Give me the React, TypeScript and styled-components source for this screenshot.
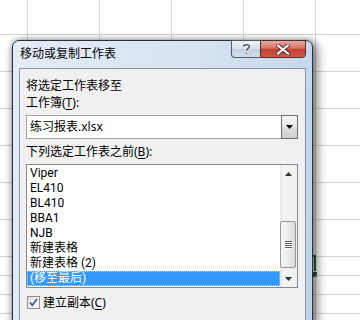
import styled, { createGlobalStyle } from "styled-components";

const GlobalStyle = createGlobalStyle`
  html, body {
    margin: 0;
    padding: 0;
    background: #fff;
  }
  body {
    width: 360px;
    height: 320px;
    overflow: hidden;
    font-family: "Noto Sans", "Noto Sans CJK SC", sans-serif;
  }
`;

const colWidths = [28, 72, 72, 72, 72, 72];
const rowHeights = [35, 37, 37, 37, 37, 37, 37, 19, 19, 19, 19];
const activeCell = { row: 7, col: 4 };

const sheets = [
  "Viper",
  "EL410",
  "BL410",
  "BBA1",
  "NJB",
  "新建表格",
  "新建表格 (2)",
  "(移至最后)",
];
const selectedSheet = 7;

export default function App() {
  return (
    <Screen>
      <GlobalStyle />
      <Sheet>
        {rowHeights.map((_, r) =>
          colWidths.map((_, c) => (
            <Cell key={`${r}-${c}`}>
              {r === activeCell.row && c === activeCell.col && (
                <Selection>
                  <FillHandle />
                </Selection>
              )}
            </Cell>
          ))
        )}
      </Sheet>

      <Dialog>
        <TitleBar>
          <Title>移动或复制工作表</Title>
          <CaptionButtons>
            <HelpButton>
              <svg width="9" height="12" viewBox="0 0 9 12">
                <path
                  d="M1.5 3.5 C1.5 1.2 7.5 1.2 7.5 3.6 C7.5 5.6 4.5 5.4 4.5 7.8"
                  fill="none"
                  stroke="#fff"
                  strokeWidth="3.2"
                />
                <path
                  d="M1.5 3.5 C1.5 1.2 7.5 1.2 7.5 3.6 C7.5 5.6 4.5 5.4 4.5 7.8"
                  fill="none"
                  stroke="#4b5563"
                  strokeWidth="1.6"
                />
                <rect x="3.3" y="9.2" width="2.4" height="2.4" fill="#4b5563" stroke="#fff" strokeWidth="0.6" />
              </svg>
            </HelpButton>
            <CloseButton>
              <svg width="14" height="11" viewBox="0 0 14 11">
                <path d="M2 1.5 L12 9.5 M12 1.5 L2 9.5" stroke="#5a2020" strokeWidth="4" strokeLinecap="square" />
                <path d="M2 1.5 L12 9.5 M12 1.5 L2 9.5" stroke="#fff" strokeWidth="2.2" strokeLinecap="square" />
              </svg>
            </CloseButton>
          </CaptionButtons>
        </TitleBar>

        <Client>
          <Label>将选定工作表移至</Label>
          <Label>
            工作簿(<u>T</u>):
          </Label>
          <Combo>
            <ComboText>练习报表.xlsx</ComboText>
            <DropButton>
              <svg width="7" height="4" viewBox="0 0 7 4">
                <path d="M0 0 H7 L3.5 4 Z" fill="#000" />
              </svg>
            </DropButton>
          </Combo>

          <Label $gap={4}>
            下列选定工作表之前(<u>B</u>):
          </Label>
          <ListBox>
            <Items>
              {sheets.map((name, i) => (
                <Item key={name} $selected={i === selectedSheet}>
                  {name}
                </Item>
              ))}
            </Items>
            <ScrollBar>
              <ScrollArrow>
                <svg width="7" height="4" viewBox="0 0 7 4">
                  <path d="M0 4 H7 L3.5 0 Z" fill="#333" />
                </svg>
              </ScrollArrow>
              <Track $offset={39}>
                <Thumb>
                  <Grip>
                    <span />
                    <span />
                    <span />
                    <span />
                  </Grip>
                </Thumb>
              </Track>
              <ScrollArrow>
                <svg width="7" height="4" viewBox="0 0 7 4">
                  <path d="M0 0 H7 L3.5 4 Z" fill="#333" />
                </svg>
              </ScrollArrow>
            </ScrollBar>
          </ListBox>

          <CheckRow>
            <CheckBox>
              <svg width="11" height="11" viewBox="0 0 11 11">
                <path d="M2 5.5 L4.3 8.3 L9 2" fill="none" stroke="#4a5f94" strokeWidth="1.8" />
              </svg>
            </CheckBox>
            <CheckLabel>
              建立副本(<u>C</u>)
            </CheckLabel>
          </CheckRow>
        </Client>
      </Dialog>
    </Screen>
  );
}

const Screen = styled.div`
  position: relative;
  width: 360px;
  height: 320px;
  overflow: hidden;
  background: #fff;
`;

const Sheet = styled.div`
  display: grid;
  grid-template-columns: ${colWidths.map((w) => `${w}px`).join(" ")};
  grid-template-rows: ${rowHeights.map((h) => `${h}px`).join(" ")};
`;

const Cell = styled.div`
  position: relative;
  box-sizing: border-box;
  border-right: 1px solid #d4d4d4;
  border-bottom: 1px solid #d4d4d4;
`;

const Selection = styled.div`
  position: absolute;
  top: -2px;
  left: -2px;
  right: -1px;
  bottom: -1px;
  border: 2px solid #1f5a3c;
`;

const FillHandle = styled.div`
  position: absolute;
  right: -4px;
  bottom: -4px;
  width: 5px;
  height: 5px;
  background: #1f5a3c;
  border: 1px solid #fff;
`;

const Dialog = styled.div`
  position: absolute;
  left: 12px;
  top: 40px;
  width: 301px;
  height: 300px;
  box-sizing: border-box;
  display: flex;
  flex-direction: column;
  border: 1px solid #29313b;
  border-radius: 7px 7px 0 0;
  background: linear-gradient(100deg, #e4ecf5 0%, #d6e2ef 55%, #bdd3eb 100%);
  box-shadow: 3px 3px 10px 2px rgba(0, 0, 0, 0.45), 0 0 4px rgba(0, 0, 0, 0.3);
`;

const TitleBar = styled.div`
  height: 27px;
  display: flex;
  justify-content: space-between;
  align-items: flex-start;
  padding-left: 7px;
  padding-right: 6px;
`;

const Title = styled.div`
  padding-top: 4px;
  font-size: 12px;
  line-height: 17px;
  color: #000;
`;

const CaptionButtons = styled.div`
  display: flex;
  margin-top: -1px;
  height: 18px;
`;

const HelpButton = styled.div`
  width: 29px;
  box-sizing: border-box;
  display: flex;
  align-items: center;
  justify-content: center;
  border: 1px solid #4e5b6d;
  border-right: none;
  border-radius: 0 0 0 4px;
  background: linear-gradient(#eef2f8 0%, #d8e0eb 48%, #c2cedd 52%, #d5dfeb 100%);
`;

const CloseButton = styled.div`
  width: 46px;
  box-sizing: border-box;
  display: flex;
  align-items: center;
  justify-content: center;
  border: 1px solid #51302c;
  border-radius: 0 0 4px 0;
  background: linear-gradient(#e8a89f 0%, #d97466 45%, #c33f30 52%, #cf5a4a 100%);
`;

const Client = styled.div`
  flex: 1;
  margin: 0 6px;
  box-sizing: border-box;
  border: 1px solid #8797ab;
  border-bottom: none;
  background: #f0f0f0;
  padding: 8px 0 0 6px;
  display: flex;
  flex-direction: column;
  align-items: flex-start;
`;

const Label = styled.div<{ $gap?: number }>`
  margin-top: ${(p) => p.$gap ?? 0}px;
  font-size: 12px;
  line-height: 17px;
  color: #000;
  u {
    text-underline-offset: 2px;
  }
`;

const Combo = styled.div`
  margin-top: 4px;
  width: 272px;
  height: 24px;
  box-sizing: border-box;
  display: flex;
  border: 1px solid #a3a3a3;
  background: #fff;
`;

const ComboText = styled.div`
  flex: 1;
  padding-left: 3px;
  font-size: 12px;
  line-height: 22px;
  color: #000;
`;

const DropButton = styled.div`
  width: 17px;
  margin: -1px -1px -1px 0;
  box-sizing: border-box;
  display: flex;
  align-items: center;
  justify-content: center;
  border: 1px solid #6f6f6f;
  background: linear-gradient(#f3f3f3 0%, #ebebeb 48%, #dddddd 52%, #cfcfcf 100%);
`;

const ListBox = styled.div`
  margin-top: 4px;
  width: 272px;
  height: 124px;
  box-sizing: border-box;
  display: flex;
  border: 1px solid #828790;
  background: #fff;
`;

const Items = styled.div`
  flex: 1;
  padding-top: 1px;
`;

const Item = styled.div<{ $selected?: boolean }>`
  height: 15px;
  padding-left: 3px;
  font-family: Roboto, "Noto Sans CJK SC", sans-serif;
  font-size: 12px;
  line-height: 15px;
  white-space: nowrap;
  color: ${(p) => (p.$selected ? "#fff" : "#000")};
  background: ${(p) => (p.$selected ? "#3399ff" : "transparent")};
  outline: ${(p) => (p.$selected ? "1px dotted #a9d4ff" : "none")};
  outline-offset: -1px;
`;

const ScrollBar = styled.div`
  width: 17px;
  display: flex;
  flex-direction: column;
  background: linear-gradient(to right, #e6e6e6 0%, #f3f3f3 20%, #f0f0f0 100%);
`;

const ScrollArrow = styled.div`
  height: 17px;
  display: flex;
  align-items: center;
  justify-content: center;
`;

const Track = styled.div<{ $offset: number }>`
  flex: 1;
  padding-top: ${(p) => p.$offset}px;
`;

const Thumb = styled.div`
  width: 16px;
  height: 47px;
  box-sizing: border-box;
  display: flex;
  align-items: center;
  justify-content: center;
  border: 1px solid #979797;
  border-radius: 2px;
  background: linear-gradient(to right, #f6f6f6 0%, #ebebeb 50%, #dadada 100%);
`;

const Grip = styled.div`
  display: flex;
  flex-direction: column;
  gap: 1px;
  span {
    width: 7px;
    height: 1px;
    background: #5f5f5f;
    box-shadow: 0 1px 0 #fff;
  }
`;

const CheckRow = styled.div`
  margin-top: 8px;
  padding-left: 1px;
  display: flex;
  align-items: center;
  gap: 3px;
`;

const CheckBox = styled.div`
  width: 13px;
  height: 13px;
  box-sizing: border-box;
  display: flex;
  align-items: center;
  justify-content: center;
  border: 1px solid #8e8f8f;
  background: linear-gradient(135deg, #dcdcdc 0%, #f4f4f4 60%, #fff 100%);
`;

const CheckLabel = styled.div`
  font-size: 12px;
  line-height: 13px;
  color: #000;
  u {
    text-underline-offset: 2px;
  }
`;
